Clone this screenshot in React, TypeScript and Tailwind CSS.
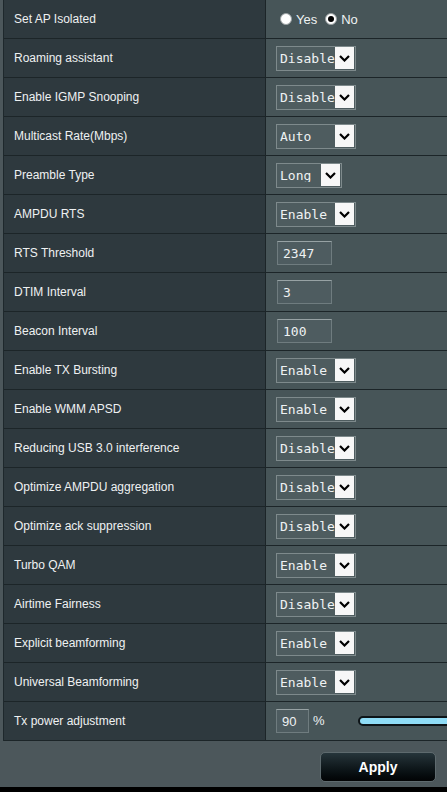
import React from 'react';

type Ctl =
    | { kind: 'radio' }
    | { kind: 'select'; value: string; width: number }
    | { kind: 'input'; value: string }
    | { kind: 'power' };

const rows: { label: string; ctl: Ctl }[] = [
    { label: 'Set AP Isolated', ctl: { kind: 'radio' } },
    { label: 'Roaming assistant', ctl: { kind: 'select', value: 'Disable', width: 80 } },
    { label: 'Enable IGMP Snooping', ctl: { kind: 'select', value: 'Disable', width: 80 } },
    { label: 'Multicast Rate(Mbps)', ctl: { kind: 'select', value: 'Auto', width: 80 } },
    { label: 'Preamble Type', ctl: { kind: 'select', value: 'Long', width: 66 } },
    { label: 'AMPDU RTS', ctl: { kind: 'select', value: 'Enable', width: 80 } },
    { label: 'RTS Threshold', ctl: { kind: 'input', value: '2347' } },
    { label: 'DTIM Interval', ctl: { kind: 'input', value: '3' } },
    { label: 'Beacon Interval', ctl: { kind: 'input', value: '100' } },
    { label: 'Enable TX Bursting', ctl: { kind: 'select', value: 'Enable', width: 80 } },
    { label: 'Enable WMM APSD', ctl: { kind: 'select', value: 'Enable', width: 80 } },
    { label: 'Reducing USB 3.0 interference', ctl: { kind: 'select', value: 'Disable', width: 80 } },
    { label: 'Optimize AMPDU aggregation', ctl: { kind: 'select', value: 'Disable', width: 80 } },
    { label: 'Optimize ack suppression', ctl: { kind: 'select', value: 'Disable', width: 80 } },
    { label: 'Turbo QAM', ctl: { kind: 'select', value: 'Enable', width: 80 } },
    { label: 'Airtime Fairness', ctl: { kind: 'select', value: 'Disable', width: 80 } },
    { label: 'Explicit beamforming', ctl: { kind: 'select', value: 'Enable', width: 80 } },
    { label: 'Universal Beamforming', ctl: { kind: 'select', value: 'Enable', width: 80 } },
    { label: 'Tx power adjustment', ctl: { kind: 'power' } },
];

const Select: React.FC<{ value: string; width: number }> = ({ value, width }) => (
    <div
        className="flex h-[25px] items-center border border-[#7e8a8c] bg-[#4e5c5f] pl-[3px] pr-px"
        style={{ width }}
    >
        <span className="flex-1 font-['DejaVu_Sans_Mono',monospace] text-[13px] leading-none text-[#eef2f3] whitespace-nowrap overflow-hidden">
            {value}
        </span>
        <span className="flex h-[22px] w-[19px] items-center justify-center bg-[#f7f7f7]">
            <svg width="11" height="7" viewBox="0 0 11 7">
                <polyline points="1,1 5.5,5.5 10,1" fill="none" stroke="#000" strokeWidth="2.2" />
            </svg>
        </span>
    </div>
);

const TextBox: React.FC<{ value: string; w: string; mono?: boolean }> = ({ value, w, mono = true }) => (
    <div
        className={`flex h-[24px] ${w} items-center border border-[#6f7c7f] border-t-[#97a2a4] bg-[#4e5c60] pl-[5px] text-[13px] leading-none text-[#eef2f3] ${mono ? "font-['DejaVu_Sans_Mono',monospace]" : "font-['Liberation_Sans',Arial,sans-serif]"}`}
    >
        {value}
    </div>
);

const Radio: React.FC<{ checked?: boolean }> = ({ checked = false }) => (
    <span className="flex h-[12px] w-[12px] items-center justify-center rounded-full border border-[#9aa0a2] bg-white">
        {checked && <span className="h-[6px] w-[6px] rounded-full bg-black" />}
    </span>
);

const Control: React.FC<{ ctl: Ctl }> = ({ ctl }) => {
    if (ctl.kind === 'radio')
        return (
            <div className="flex items-center text-[13px] text-[#eef2f3] pl-[4px]">
                <Radio />
                <span className="ml-[4px] mt-[2px]">Yes</span>
                <span className="ml-[8px]"><Radio checked /></span>
                <span className="ml-[4px] mt-[2px]">No</span>
            </div>
        );
    if (ctl.kind === 'select') return <Select value={ctl.value} width={ctl.width} />;
    if (ctl.kind === 'input')
        return (
            <div className="pl-[1px]">
                <TextBox value={ctl.value} w="w-[55px]" />
            </div>
        );
    return (
        <div className="flex items-center">
            <TextBox value="90" w="w-[33px]" mono={false} />
            <span className="ml-[4px] text-[13px] text-[#eef2f3]">%</span>
            <div className="ml-[33px] h-[10px] w-[200px] rounded-l-full border-2 border-[#0d1418] bg-[#8fdcf6]" />
        </div>
    );
};

export default function App() {
    return (
        <div className="flex h-[792px] w-[447px] flex-col overflow-hidden bg-[#4c575b] font-['Liberation_Sans',Arial,sans-serif]">
            <div className="ml-[3px] w-[600px] border-l border-[#1e282c]">
                {rows.map(r => (
                    <div key={r.label} className="flex h-[39px] border-b border-[#1c2528]">
                        <div className="flex w-[262px] items-center border-r border-[#1c2528] bg-[#2e393e] pl-[10px] text-[12px] text-[#eef1f2]">
                            {r.label}
                        </div>
                        <div className="flex flex-1 items-center bg-[#475558] pl-[10px]">
                            <Control ctl={r.ctl} />
                        </div>
                    </div>
                ))}
            </div>
            <div className="flex flex-1 justify-end pr-[11px] pt-[11px]">
                <button className="h-[30px] w-[116px] rounded-[5px] border border-[#5e6a6e] bg-gradient-to-b from-[#26353b] to-[#020405] text-[14px] font-bold text-white">
                    Apply
                </button>
            </div>
            <div className="h-[5px] bg-black" />
        </div>
    );
}
